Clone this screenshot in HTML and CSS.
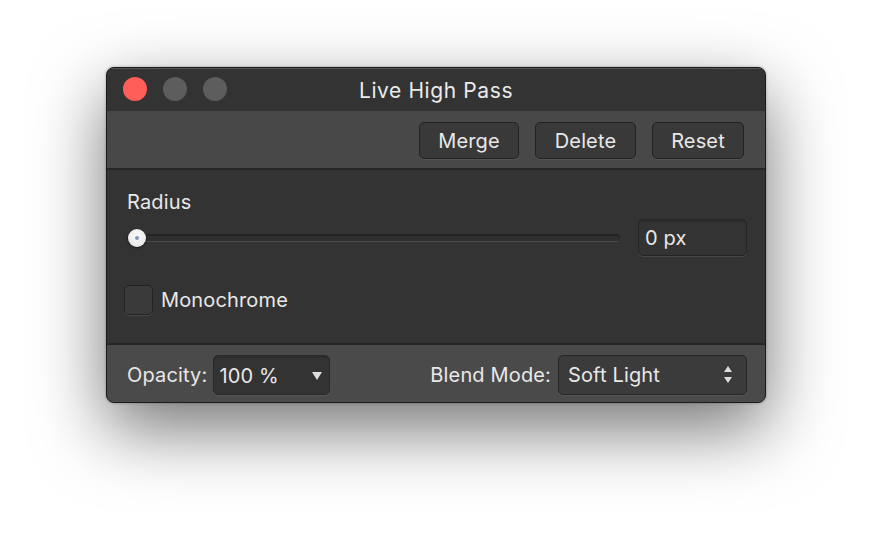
FILE: index.html
```html
<!DOCTYPE html>
<html lang="en">
<head>
    <meta charset="UTF-8">
    <meta name="viewport" content="width=device-width, initial-scale=1.0">
    <title>Live High Pass</title>
    <link rel="stylesheet" href="styles.css">
</head>
<body>
    <div class="window">
        <div class="titlebar">
            <div class="lights">
                <span class="light close"></span>
                <span class="light"></span>
                <span class="light"></span>
            </div>
            <div class="title">Live High Pass</div>
        </div>
        <div class="toolbar">
            <button class="button merge">Merge</button>
            <button class="button delete">Delete</button>
            <button class="button reset">Reset</button>
        </div>
        <div class="content">
            <div class="label">Radius</div>
            <div class="slider-row">
                <div class="slider">
                    <div class="track"></div>
                    <div class="thumb"><span class="dot"></span></div>
                </div>
                <div class="field">0 px</div>
            </div>
            <label class="check-row">
                <span class="checkbox"></span>
                <span>Monochrome</span>
            </label>
        </div>
        <div class="footer">
            <div class="group">
                <span class="label">Opacity:</span>
                <div class="dropdown">
                    <span>100 %</span>
                    <span class="caret"></span>
                </div>
            </div>
            <div class="group">
                <span class="label">Blend Mode:</span>
                <div class="select">
                    <span>Soft Light</span>
                    <span class="updown">
                        <span class="up"></span>
                        <span class="down"></span>
                    </span>
                </div>
            </div>
        </div>
    </div>
</body>
</html>
```

FILE: styles.css
```css
body {
    margin: 0;
    height: 541px;
    background: #fff;
    font-family: Inter, 'Noto Sans', sans-serif;
    font-size: 20px;
    letter-spacing: 0.15px;
    color: #e8e8e8;
    padding: 67px 0 0 106px;
    box-sizing: border-box;
}
.window {
    width: 660px;
    height: 336px;
    box-sizing: border-box;
    border: 1px solid #1b1b1b;
    border-radius: 8px;
    overflow: hidden;
    background: #333;
    box-shadow: 0 26px 70px rgba(0, 0, 0, 0.55), 0 0 3px rgba(0, 0, 0, 0.3);
}
.titlebar {
    position: relative;
    height: 43px;
    background: #333;
    box-shadow: inset 0 1px 0 #555;
    display: flex;
    align-items: center;
    justify-content: center;
}
.lights {
    position: absolute;
    left: 16px;
    top: 9px;
    display: flex;
    gap: 16px;
}
.light {
    width: 24px;
    height: 24px;
    border-radius: 50%;
    background: #5d5d5d;
}
.light.close {
    background: #fe5e57;
}
.title {
    font-size: 21px;
    letter-spacing: 0.6px;
    color: #ebebeb;
    margin-top: 1px;
}
.toolbar {
    height: 57px;
    background: #484848;
    border-bottom: 2px solid #262626;
    display: flex;
    align-items: center;
    justify-content: flex-end;
    padding-right: 21px;
    gap: 16px;
}
.button {
    height: 37px;
    font-family: inherit;
    font-size: 20px;
    letter-spacing: 0.15px;
    color: #e8e8e8;
    background: #393939;
    border: 1px solid #222;
    border-radius: 5px;
    box-shadow: 0 1px 0 #555;
    padding: 0;
    margin-top: 2px;
}
.merge { width: 100px; }
.delete { width: 101px; }
.reset { width: 92px; }
.content {
    height: 175px;
    box-sizing: border-box;
    border-bottom: 2px solid #262626;
    padding: 20px 18px 0 20px;
}
.label {
    line-height: 24px;
}
.slider-row {
    display: flex;
    align-items: center;
    margin-top: 5px;
    height: 37px;
}
.slider {
    position: relative;
    width: 493px;
    height: 20px;
    display: flex;
    align-items: center;
    margin-right: 18px;
}
.track {
    width: 100%;
    height: 5px;
    background: #2f2f2f;
    border: 1px solid #232323;
    border-bottom-color: #4a4a4a;
    border-top-width: 2px;
    border-radius: 5px;
}
.thumb {
    position: absolute;
    left: 1px;
    top: 1px;
    width: 18px;
    height: 18px;
    border-radius: 50%;
    background: radial-gradient(circle at 50% 40%, #fafafa, #e2e2e2);
    box-shadow: 0 1px 2px rgba(0, 0, 0, 0.5);
    display: flex;
    align-items: center;
    justify-content: center;
}
.dot {
    width: 4px;
    height: 4px;
    border-radius: 50%;
    background: #7f98bd;
}
.field {
    width: 101px;
    height: 35px;
    border: 1px solid #252525;
    border-radius: 5px;
    background: #333;
    box-shadow: inset 0 2px 0 #2b2b2b, 0 1px 0 #464646;
    display: flex;
    align-items: center;
    padding-left: 6px;
    box-sizing: content-box;
}
.check-row {
    display: flex;
    align-items: center;
    gap: 8px;
    margin-top: 29px;
    margin-left: -3px;
}
.checkbox {
    width: 27px;
    height: 28px;
    border: 1px solid #232323;
    border-radius: 5px;
    background: #3a3a3a;
    box-shadow: 0 1px 0 #474747;
}
.footer {
    height: 57px;
    background: #4a4a4a;
    display: flex;
    align-items: center;
    justify-content: space-between;
    padding: 0 18px 0 20px;
}
.group {
    display: flex;
    align-items: center;
    gap: 6px;
    margin-top: 2px;
}
.dropdown {
    width: 117px;
    height: 40px;
    box-sizing: border-box;
    border: 1px solid #2a2a2a;
    border-radius: 5px;
    background: #333;
    box-shadow: inset 0 2px 0 #2d2d2d, 0 1px 0 #555;
    display: flex;
    align-items: center;
    justify-content: space-between;
    padding: 2px 7px 0 5px;
}
.caret {
    width: 0;
    height: 0;
    border-left: 5px solid transparent;
    border-right: 5px solid transparent;
    border-top: 8px solid #ddd;
}
.select {
    width: 189px;
    height: 40px;
    box-sizing: border-box;
    border: 1px solid #262626;
    border-radius: 5px;
    background: #3b3b3b;
    box-shadow: 0 1px 0 #555;
    display: flex;
    align-items: center;
    justify-content: space-between;
    padding: 0 14px 0 9px;
    margin-left: 1px;
}
.updown {
    display: flex;
    flex-direction: column;
    gap: 5px;
}
.up {
    border-left: 4px solid transparent;
    border-right: 4px solid transparent;
    border-bottom: 6px solid #ddd;
}
.down {
    border-left: 4px solid transparent;
    border-right: 4px solid transparent;
    border-top: 6px solid #ddd;
}
```
